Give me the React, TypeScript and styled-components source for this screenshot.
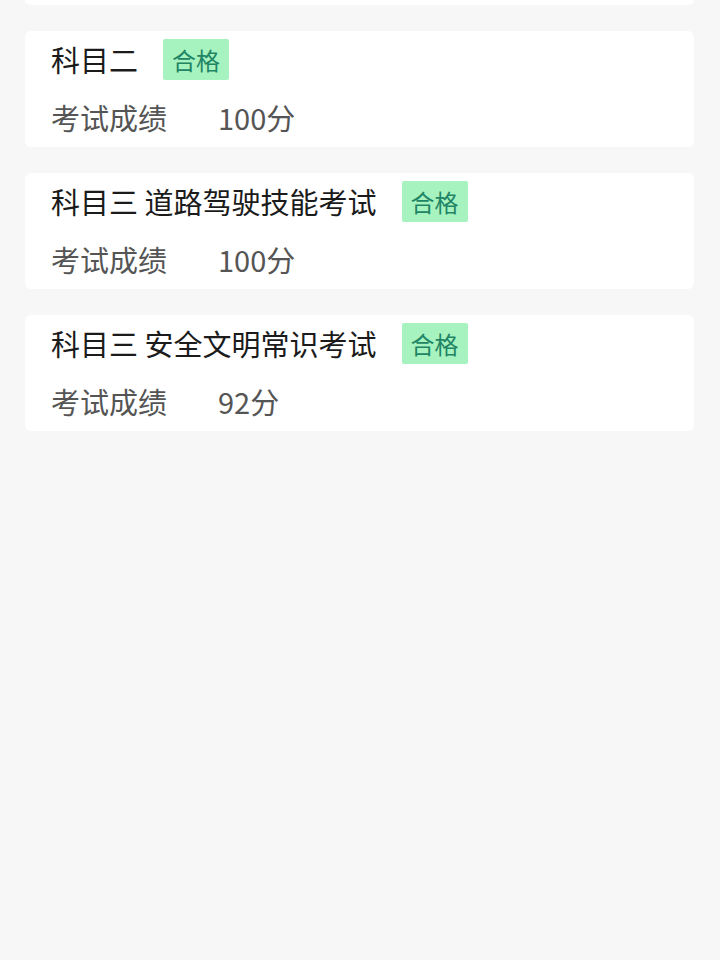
import React from "react";
import styled, { createGlobalStyle } from "styled-components";

const GlobalStyle = createGlobalStyle`
  html, body {
    margin: 0;
    padding: 0;
    background: #f7f7f7;
    font-family: "Noto Sans CJK SC", "Noto Sans", sans-serif;
  }
  #root {
    min-height: 960px;
    background: #f7f7f7;
  }
`;

const Page = styled.div`
  width: 720px;
  height: 960px;
  overflow: hidden;
  background: #f7f7f7;
`;

const List = styled.div`
  display: flex;
  flex-direction: column;
  gap: 26px;
  padding: 0 26px 0 25px;
`;

const PeekCard = styled.div`
  height: 5px;
  background: #ffffff;
  border-radius: 0 0 6px 6px;
`;

const Card = styled.div`
  box-sizing: border-box;
  height: 116px;
  background: #ffffff;
  border-radius: 6px;
  padding: 8px 26px 0 26px;
  display: flex;
  flex-direction: column;
`;

const TitleRow = styled.div`
  display: flex;
  align-items: center;
  height: 41px;
  gap: 25px;
`;

const Title = styled.span`
  font-size: 29px;
  line-height: 41px;
  color: #1b1b1b;
  white-space: nowrap;
`;

const Badge = styled.span`
  box-sizing: border-box;
  height: 41px;
  padding: 0 9px;
  display: inline-flex;
  align-items: center;
  background: #a7f3c0;
  color: #1f8565;
  font-size: 24px;
  border-radius: 2px;
`;

const ScoreRow = styled.div`
  display: flex;
  align-items: center;
  margin-top: 17px;
  height: 40px;
  font-size: 29px;
  color: #555555;
`;

const Label = styled.span`
  width: 167px;
  white-space: nowrap;
`;

const Value = styled.span`
  white-space: nowrap;
`;

type Exam = { title: string; score: number };

const exams: Exam[] = [
  { title: "科目二", score: 100 },
  { title: "科目三 道路驾驶技能考试", score: 100 },
  { title: "科目三 安全文明常识考试", score: 92 },
];

export default function App() {
  return (
    <Page>
      <GlobalStyle />
      <List>
        <PeekCard />
        {exams.map((e) => (
          <Card key={e.title}>
            <TitleRow>
              <Title>{e.title}</Title>
              <Badge>合格</Badge>
            </TitleRow>
            <ScoreRow>
              <Label>考试成绩</Label>
              <Value>{e.score}分</Value>
            </ScoreRow>
          </Card>
        ))}
      </List>
    </Page>
  );
}
